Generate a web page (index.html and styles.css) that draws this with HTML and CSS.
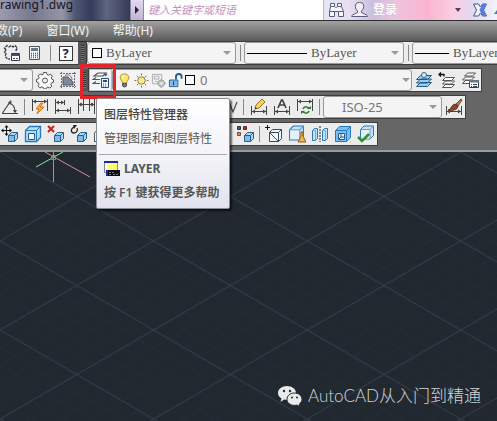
FILE: index.html
```html
<!DOCTYPE html>
<html lang="zh-CN">
<head>
<meta charset="utf-8">
<title>Drawing1.dwg</title>
<link rel="stylesheet" href="styles.css">
</head>
<body>
<svg class="defs" aria-hidden="true">
  <symbol id="cube" viewBox="0 0 10 10"><path d="M.5 3.5 3.5.5h6v6l-3 3h-6z" fill="#a9d4f5" stroke="#28608f"/><path d="M1 4h5v5H1z" fill="#7dbcec"/><path d="M.5 3.500h6v6M6.500 3.500l3-3" fill="none" stroke="#28608f"/></symbol>
  <symbol id="bigcube" viewBox="0 0 16 16"><path d="M1.500 4.500 5 1h9.500v9.500L11 14H1.500z" fill="#c4e3fa" stroke="#2778bd"/><path d="M2 5h9v8.500H2z" fill="#e4f2fc"/><path d="M1.500 4.500H11V14M11 4.500 14.500 1" fill="none" stroke="#5ba3dc"/></symbol>
  <symbol id="arrow" viewBox="0 0 8 4"><path d="M0 0h8L4 4z" fill="#999"/></symbol>
  <symbol id="dim" viewBox="0 0 18 18"><path d="M1.500 1v12M16.500 1v12M2 3.500h14" fill="none" stroke="#444"/><path d="m2 3.500 3-2v4zm14 0-3-2v4z" fill="#444"/></symbol>
  <symbol id="dimlow" viewBox="0 0 18 18"><path d="M1.500 8v9M16.500 8v9M2 13.500h14" fill="none" stroke="#444"/><path d="m2 13.500 3-2v4zm14 0-3-2v4z" fill="#444"/></symbol>
</svg>

<header class="titlebar">
  <div class="filename">rawing1.dwg</div>
  <button class="expand" aria-label="展开"><svg viewBox="0 0 4 8"><path d="M0 0v8l4-4z" fill="#223"/></svg></button>
  <input class="search" type="text" placeholder="键入关键字或短语" aria-label="键入关键字或短语">
  <div class="account">
    <button aria-label="搜索"><svg class="i18" viewBox="0 0 18 18"><path d="M3.500 5.500v-3h4v3l1 1h1l1-1v-3h4v3l2 5v5h-5v-5h-4v5h-5v-5z" fill="#f7f8fd" stroke="#56607c"/><path d="M2.500 10.500h5M11.500 10.500h5M3.500 5.500h4M10.500 5.500h4" stroke="#56607c"/></svg></button>
    <button class="login"><svg class="i18" viewBox="0 0 18 18"><path d="M6.500 10c-2-2-2.500-4-2-6C5 2 6.500 1.500 8.500 1.500S12 2 12.500 4c.5 2 0 4-2 6v1.500l5 2.500c1 .5 1 1.500 1 1.500H.5s0-1 1-1.500l5-2.500z" fill="#f4eef8" stroke="#56607c"/></svg><span>登录</span></button>
    <svg class="drop" viewBox="0 0 6 4"><path d="M0 0h6L3 4z" fill="#636"/></svg>
    <button aria-label="Exchange"><svg class="i18" viewBox="0 0 18 18"><path d="M2.500 3h5l2 3 2-3h4l-3 6 3 6h-4l-2-3-2 3h-5l3-6z" fill="#eef2ff" stroke="#3f5590"/><path d="M11.500 3h4l-3 6 3 6h-4l-3-6z" fill="#557ee0"/></svg></button>
    <svg class="tri" viewBox="0 0 8 10"><path d="m1 9 6-8v8z" fill="#5572b8"/></svg>
  </div>
</header>

<nav class="menu">
  <a href="#">数(P)</a><a href="#">窗口(W)</a><a href="#">帮助(H)</a>
</nav>

<main class="workspace">
  <div class="row props">
    <div class="bar edge">
      <button class="tool" aria-label="标记集"><svg viewBox="0 0 18 18"><path d="M3 6 1.500 4 4 1.500 6 3l2-1.500L10 3l2-1.500L14.500 4 13 6l1 1.500M3 6 1.500 8.500 3 10l-1 2 2.500 3H7" fill="none" stroke="#333" stroke-width="1.300" stroke-dasharray="3 1"/><path d="M8.500 9.500h8v7h-8z" fill="#fff" stroke="#335"/><path d="M8 10h9v2H8z" fill="#456"/><path d="M10 14.500h2m1 0h2" stroke="#456"/></svg></button>
      <button class="tool" aria-label="计算器"><svg viewBox="0 0 18 18"><path d="M3.500 2.500h10v13h-10z" fill="#f6f8fa" stroke="#456"/><path d="M5 4h7v3H5z" fill="#678"/><path d="M5 9.500h7M5 11.500h7M5 13.500h7" stroke="#567" stroke-dasharray="1 1" stroke-width="1.300"/></svg></button>
      <span class="sep"></span>
      <button class="tool help" aria-label="帮助"><b>?</b></button>
    </div>
    <span class="grip"></span>
    <div class="bar grow">
      <label class="combo color"><i class="swatch"></i><select aria-label="颜色"><option>ByLayer</option></select><svg class="caret"><use href="#arrow"/></svg></label>
      <span class="sep"></span>
      <label class="combo linetype"><i class="line"></i><select aria-label="线型"><option>ByLayer</option></select><svg class="caret"><use href="#arrow"/></svg></label>
      <span class="sep"></span>
      <label class="combo weight"><i class="line"></i><select aria-label="线宽"><option>ByLayer</option></select></label>
    </div>
  </div>

  <div class="row layers">
    <div class="bar edge">
      <label class="combo space"><select aria-label="工作空间"><option></option></select><svg class="caret"><use href="#arrow"/></svg></label>
      <button class="tool" aria-label="设置"><svg viewBox="0 0 18 18"><path d="M7.500 1.500h3l.5 2 1.500.7L14.400 3l1.900 2-1 1.900.5 1.300 1.700.6v2.400l-2 .6-.6 1.500 1 1.800-2 2-1.900-1-1.400.6-.6 1.300h-2l-.6-1.500-1.500-.6-1.900 1-2-2 1-1.800-.6-1.500-1.900-.6V8.400l2-.5.6-1.400-1-1.800 2-1.800 1.800 1 1.300-.6z" fill="#fafafa" stroke="#555"/><circle cx="9" cy="9.500" r="2.500" fill="#eee" stroke="#555"/></svg></button>
      <button class="tool" aria-label="我的工作空间"><svg viewBox="0 0 18 18"><path d="M2.500 1v16M15.500 1v16M1 2.500h16M1 15.500h16" stroke="#667" stroke-dasharray="2 1"/><path d="M4 14V6h5l5 5v3z" fill="#7d8996" stroke="#556"/><path d="M6 5c3-3 7 0 7 4" fill="none" stroke="#667"/></svg></button>
    </div>
    <span class="grip"></span>
    <div class="bar">
      <button class="tool active" aria-label="图层特性管理器"><svg viewBox="0 0 18 18"><path d="m2 5 4-3h8l-3 3zM8 8.500H1l3-2M8 12.500H1l3-2M13 5l2-2" fill="none" stroke="#555" stroke-width="1.200"/><path d="M9.500 7.500h7v9h-7z" fill="#eff6ff" stroke="#234f86"/><path d="M11 9h4v2h-4z" fill="#234f86"/><path d="M11 13h4m-4 2h4" stroke="#234f86" stroke-dasharray="1 1"/></svg></button>
      <div class="combo layer">
        <svg class="st" viewBox="0 0 14 18"><path d="M7 2C4 2 2 4 2.500 6.500c.3 2 2 3 2.500 5.500h4c.5-2.500 2.200-3.500 2.500-5.500C12 4 10 2 7 2z" fill="#ffe36b" stroke="#a88a34"/><path d="M5 12h4v3l-2 1-2-1z" fill="#778" stroke="#445"/><path d="M5 6c0-1 1-2 2-2" stroke="#fff" fill="none"/></svg>
        <svg class="st" viewBox="0 0 16 18"><circle cx="8" cy="9" r="4" fill="#ffe88a" stroke="#8d7436"/><path d="M8 1.500v2M8 14.500v2M.5 9h2M13.500 9h2M3 4l1.500 1.500M11.500 12.500 13 14M13 4l-1.500 1.500M4.500 12.500 3 14" stroke="#765"/></svg>
        <svg class="st" viewBox="0 0 16 18"><path d="M9 12.500H1.500v-10h10V8M3.500 4.500h5v3h-5zM4 10h3" fill="none" stroke="#aaa"/><circle cx="11" cy="12" r="3.500" fill="#ccc" stroke="#999"/><path d="M11 7v2m0 6v2m-5-5h2m6 0h2" stroke="#999"/><circle cx="11" cy="12" r="1" fill="#fff"/></svg>
        <svg class="st" viewBox="0 0 16 18"><path d="M8.500 8V5c0-4 6-4 6 0v2" fill="none" stroke="#245f94" stroke-width="2"/><path d="M1.500 8.500h9v7h-9z" fill="#7fbdf0" stroke="#245f94"/><path d="M6 10v4" stroke="#123"/></svg>
        <i class="swatch"></i>
        <select aria-label="图层"><option>0</option></select><svg class="caret"><use href="#arrow"/></svg>
      </div>
      <button class="tool" aria-label="置为当前"><svg viewBox="0 0 18 18"><path d="m1.500 15.500 4-4h11l-4 4zM1.500 12l4-4h11l-4 4zM1.500 8.500l4-4h11l-4 4z" fill="#9bcdf2" stroke="#235985"/><circle cx="9" cy="4" r="2.500" fill="#dcecf8" stroke="#36628a"/></svg></button>
      <button class="tool" aria-label="上一个图层"><svg viewBox="0 0 18 18"><path d="m4.500 16.500 3-3h9l-3 3zM4.500 13l3-3h9l-3 3zM4.500 9.500l3-3h9l-3 3z" fill="#fff" stroke="#555"/><path d="M1 3.500h5v2M3 1.500l-2 2 2 2" fill="none" stroke="#111" stroke-width="1.300"/></svg></button>
      <button class="tool" aria-label="图层状态管理器"><svg viewBox="0 0 18 18"><path d="m1.500 12.500 3-3h9l-3 3zM1.500 9l3-3h9l-3 3zM3.500 5l3-3h8l-3 3z" fill="#fff" stroke="#555"/><path d="M8.500 9.500h9v7h-9z" fill="#fff" stroke="#345"/><path d="M8 9h10v2.500H8z" fill="#678"/><path d="M10 13.500h1m1 0h4m-6 2h1m1 0h4" stroke="#345"/></svg></button>
    </div>
  </div>

  <div class="row dims">
    <div class="bar shift">
      <button class="tool" aria-label="角度"><svg viewBox="0 0 18 18"><path d="M1 15.500h16M1.500 15 10 2.500M8 5c4 1 6 4 6 9" fill="none" stroke="#444" stroke-width="1.200"/><path d="m7 4 4-.5L9 7zm5 8h4l-2 3.500z" fill="#444"/></svg></button>
      <span class="sep"></span>
      <button class="tool" aria-label="快速标注"><svg viewBox="0 0 18 18"><use href="#dim"/><path d="m10 5-5 6h3l-2 5 7-7H9l3-4z" fill="#f9b233" stroke="#d9731a"/></svg></button>
      <button class="tool" aria-label="基线"><svg viewBox="0 0 18 18"><path d="M1.500 1v15M10.500 2v5M16.500 9v7M2 4.500h8M2 12.500h14" fill="none" stroke="#444"/><path d="m2 4.500 3-2v4zm8 0-3-2v4zm-8 8 3-2v4zm14 0-3-2v4z" fill="#444"/></svg></button>
      <button class="tool" aria-label="连续"><svg viewBox="0 0 18 18"><path d="M1.500 1v15M6.500 1v12M12.500 1v12M17.500 1v15M2 6.500h15" fill="none" stroke="#444"/><path d="m2 6.500 2-2v4zm4 0-2-2v4zm7 0 2-2v4zm4 0-2-2v4z" fill="#444"/></svg></button>
      <span class="covered"></span>
      <button class="tool" aria-label="折弯线性"><svg viewBox="0 0 18 18"><path d="M1 9h6l2-5 4 10 4-10" fill="none" stroke="#444" stroke-width="1.200"/></svg></button>
      <span class="sep"></span>
      <button class="tool" aria-label="编辑标注"><svg viewBox="0 0 18 18"><use href="#dimlow"/><path d="m5 11 1-4 6-6 3 3-6 6z" fill="#ffd34f" stroke="#94702a"/><path d="m5 11 .5-2 1.500 1.500z" fill="#222"/></svg></button>
      <button class="tool" aria-label="编辑标注文字"><svg viewBox="0 0 18 18"><use href="#dimlow"/><path d="m5 10 3.500-8h1L13 10M6.500 7h5" fill="none" stroke="#444" stroke-width="1.700"/></svg></button>
      <button class="tool" aria-label="标注更新"><svg viewBox="0 0 18 18"><use href="#dim"/><path d="M7 11c1-3 5-3 6 0m0 2c-1 3-5 3-6 0" fill="none" stroke="#287b2c" stroke-width="1.500"/><path d="M11 11h4V8zM9 13H5v3z" fill="#287b2c"/></svg></button>
      <span class="sep"></span>
      <label class="combo style"><select aria-label="标注样式"><option>ISO-25</option></select><svg class="caret"><use href="#arrow"/></svg></label>
      <button class="tool" aria-label="标注样式管理"><svg viewBox="0 0 18 18"><use href="#dimlow"/><path d="m11 6 5-5 1 1-4 6z" fill="#b98a5b" stroke="#66452c"/><path d="M3 12c3 0 3-5 7-6l3 2c0 4-6 5-10 4z" fill="#8b4526" stroke="#5f2d18"/></svg></button>
    </div>
  </div>

  <div class="row">
    <div class="bar shift">
      <button class="tool" aria-label="移动面"><svg viewBox="0 0 18 18"><use href="#cube" x="7" y="7" width="10" height="10"/><path d="M5.500 1v9M1 5.500h9" stroke="#111"/><path d="m5.500 0 2 2.500h-4zm0 11-2-2.500h4zM0 5.500l2.500-2v4zm11 0-2.500 2v-4z" fill="#111"/></svg></button>
      <button class="tool" aria-label="偏移面"><svg viewBox="0 0 18 18"><path d="m1.500 5.500 4-4h11v11l-4 4h-11z" fill="#b9dcf6" stroke="#2579c1" stroke-width="1.300"/><path d="M1.500 5.500h11v11M12.500 5.500l4-4" fill="none" stroke="#2579c1"/><path d="M4.500 8.500h6v6h-6z" fill="#f4faff" stroke="#225c91"/></svg></button>
      <button class="tool" aria-label="删除面"><svg viewBox="0 0 18 18"><use href="#cube" x="7" y="7" width="10" height="10"/><path d="m1 1 6 6m0-6L1 7" stroke="#d0201b" stroke-width="2"/></svg></button>
      <button class="tool" aria-label="旋转面"><svg viewBox="0 0 18 18"><use href="#cube" x="7" y="7" width="10" height="10"/><path d="M4 2C0 4 1 8 4 8s4-3 3-5" fill="none" stroke="#222" stroke-width="1.300"/><path d="M3 0h4L4 4z" fill="#222"/></svg></button>
      <button class="tool" aria-label="倾斜面"><svg viewBox="0 0 18 18"><path d="m1.500 16.500V8l4-5h10v9l-4 4.500z" fill="#f8f8f8" stroke="#555"/></svg></button>
      <span class="covered"></span>
      <button class="tool" aria-label="着色边"><svg viewBox="0 0 18 18"><use href="#cube" x="8" y="7" width="10" height="10"/><path d="M1.500 1.500h3v3h-3z" fill="#35629b" stroke="#234"/><path d="M7.500 1.500h3v3h-3z" fill="#b23a2a" stroke="#622"/><path d="M1.500 7.500h3v3h-3z" fill="#e88b2f" stroke="#843"/></svg></button>
      <span class="sep"></span>
      <button class="tool" aria-label="压印"><svg viewBox="0 0 18 18"><path d="m4.500 7.500 3-3h9v9l-3 3h-9z" fill="#f4faff" stroke="#334b63"/><path d="M4.500 7.500h9v9M13.500 7.500l3-3M5 8l8 8" fill="none" stroke="#334b63"/><path d="M2.500 0v5M0 2.500h5" stroke="#111"/></svg></button>
      <button class="tool" aria-label="清除"><svg viewBox="0 0 18 18"><use href="#bigcube" width="17" height="17"/><path d="M13 7h2v4l3 6h-8l3-6z" fill="#f0b63f" stroke="#8d5e1b"/></svg></button>
      <button class="tool" aria-label="分割"><svg viewBox="0 0 18 18"><path d="m1.500 5.500 2-2h3v10l-2 2h-3zM11.500 5.500l2-2h3v10l-2 2h-3z" fill="#c5e3fb" stroke="#2778bd"/><path d="M4.500 15V5.500h-3M14.500 15V5.500h-3" fill="none" stroke="#68aee3"/><path d="M9 1v16" stroke="#222" stroke-dasharray="2 1"/></svg></button>
      <button class="tool" aria-label="抽壳"><svg viewBox="0 0 18 18"><path d="m1.500 5.500 4-4h11v11l-4 4h-11z" fill="#7ebdf0" stroke="#2579c1"/><path d="M1.500 5.500h11v11M12.500 5.500l4-4" fill="none" stroke="#2579c1"/><path d="M4.500 8.500h6v6h-6zM7 9v3l-2 2m2-2h3" fill="#e5f3ff" stroke="#225c91"/></svg></button>
      <button class="tool" aria-label="检查"><svg viewBox="0 0 18 18"><use href="#bigcube" x="2" width="16" height="16"/><path d="m1 12 4 4 7-7" fill="none" stroke="#35922b" stroke-width="2.500"/></svg></button>
    </div>
  </div>

  <div class="marker"></div>
  <aside class="tooltip" role="tooltip">
    <h1>图层特性管理器</h1>
    <p>管理图层和图层特性</p>
    <hr>
    <div class="command"><svg viewBox="0 0 16 16"><path d="M.5.5h13v11H.5z" fill="#ffff72" stroke="#889"/><path d="M0 0h14v2H0z" fill="#1a2a9b"/><path d="M1 2h2v8H1z" fill="#fff"/><path d="M3 9h13v6H3z" fill="#080b20"/><path d="M2 9h2v6H2z" fill="#1a2a9b"/><path d="M5 11.500h5M5 13.500h2m2 0h5" stroke="#777" stroke-dasharray="2 1"/></svg><b>LAYER</b></div>
    <p class="hint">按 F1 键获得更多帮助</p>
  </aside>
</main>

<section class="canvas">
  <svg class="grid" width="100%" height="100%">
    <defs>
      <pattern id="minor" width="30.720" height="17.800" patternUnits="userSpaceOnUse"><path d="M0 0l30.720 17.800M0 17.800 30.720 0" stroke="#242c35" stroke-width=".8"/></pattern>
      <pattern id="major" width="153.600" height="89" patternUnits="userSpaceOnUse"><path d="M0 0l153.600 89M0 89 153.600 0" stroke="#333d48"/></pattern>
    </defs>
    <rect width="100%" height="100%" fill="url(#minor)"/>
    <rect width="100%" height="100%" fill="url(#major)"/>
    <path d="m45 0 45 25" stroke="#d88c90"/><path d="M63 0 36 15" stroke="#8fe29d"/><path d="M53.500 0v30" stroke="#8d8df0"/><path d="M51.500 3.500h4v4h-4z" fill="none" stroke="#889"/>
  </svg>
  <div class="credit">
    <svg viewBox="0 0 24 21"><path d="M9 0c5 0 9 3 9 7s-4 7-9 7l-3-.5L2.500 16l1-3.500C1 11 0 9 0 7c0-4 4-7 9-7z" fill="#e8eaec"/><path d="M16.500 7c4 0 7.500 2.800 7.500 6.200 0 2-1 3.600-2.700 4.800l.7 2.700-3-1.600-2.500.3C12 19.400 9 16.600 9 13.200S12 7 16.500 7z" fill="#e8eaec" stroke="#222831"/><g fill="#222831"><circle cx="6" cy="5" r="1.200"/><circle cx="12" cy="5" r="1.200"/><circle cx="14" cy="11.500" r="1"/><circle cx="19" cy="11.500" r="1"/></g></svg>
    <span>AutoCAD从入门到精通</span>
  </div>
</section>
</body>
</html>
```
FILE: styles.css
```css
* { box-sizing: border-box; }
body {
  margin: 0;
  min-height: 100vh;
  display: flex;
  flex-direction: column;
  overflow: hidden;
  background: #212830;
  font: 12px/18px "Noto Sans", "Noto Sans CJK SC", sans-serif;
}
button, select, input { font: inherit; color: inherit; margin: 0; padding: 0; border: 0; background: none; }
select { appearance: none; outline: 0; opacity: 1; }
.defs { position: absolute; width: 0; height: 0; }

.titlebar { display: flex; height: 20px; background: #fff; overflow: hidden; }
.filename {
  width: 130px;
  color: #15151f;
  line-height: 10px;
  background: linear-gradient(90deg, #9d9aae, #77798f 25%, #9495a8 48%, #505672 58%, #343b5c 70%, #5f6480 82%, #343a58);
}
.expand { width: 14px; display: grid; place-items: center; background: linear-gradient(#e2daf0, #bfb4d6); border: solid #8d87a2; border-width: 0 1px; }
.expand svg { width: 4px; height: 8px; }
.search { width: 179px; padding-left: 4px; background: #fff; font-size: 11px; font-style: italic; }
.search::placeholder { color: #c48fc0; opacity: 1; }
.account {
  flex: 1;
  display: flex;
  align-items: center;
  gap: 4px;
  padding-left: 3px;
  border-left: 1px solid #b9b6cf;
  background: linear-gradient(90deg, #e4e6f6, #e9def0 15%, #c9bfdf 28%, #edc4dc 42%, #fbb4d2 60%, #f8cfe0 75%, #e3d8f0 85%, #f2f4fc);
}
.account button { display: flex; align-items: center; gap: 4px; height: 18px; color: #fff; }
.i18 { width: 18px; height: 18px; }
.login { margin-left: 2px; font-weight: 500; }
.drop { width: 6px; height: 4px; margin: 0 6px 0 auto; }
.tri { width: 8px; height: 10px; flex: none; margin-right: -4px; }

.menu {
  display: flex;
  gap: 24px;
  height: 22px;
  border: solid #2c2c2c;
  border-width: 1px 0;
  background: linear-gradient(#a2a2a2, #5a5a5a);
  line-height: 20px;
  overflow: hidden;
}
.menu a { color: #f4f4f4; text-decoration: none; }
.menu a:first-child { margin-left: -4px; }

.workspace {
  position: relative;
  display: flex;
  flex-direction: column;
  gap: 5px;
  padding-bottom: 5px;
  background: #666;
  border-bottom: 2px solid #989c9f;
}
.row { display: flex; height: 22px; }
.bar { display: flex; align-items: center; background: #ececec; box-shadow: 0 0 0 1px #3d3d3d; }
.grow { flex: 1; min-width: 0; }
.shift > :first-child { margin-left: -2px; }
.tool { width: 23px; height: 22px; flex: none; display: grid; place-items: center; }
.tool svg { width: 18px; height: 18px; }
.active { border: 1px solid #b5bccb; background: #f2f4f8; }
.help b { width: 14px; height: 15px; border: 1px solid #333; background: #fff; color: #223; font-size: 13px; line-height: 13px; }
.sep { width: 6px; height: 16px; flex: none; background: linear-gradient(#888, #888) center / 1px 100% no-repeat; }
.dims .sep { width: 7px; }
.props .sep { width: 8px; }
.props .edge { width: 78px; }
.layers .edge { width: 80px; }
.grip { width: 9px; flex: none; background: #555 repeating-linear-gradient(#333 0 1px, #777 1px 2px) center / 3px 16px no-repeat; }

.combo {
  display: flex;
  align-items: center;
  height: 22px;
  flex: none;
  gap: 4px;
  padding: 0 4px;
  border: 1px solid #999;
  border-radius: 3px;
  background: #f4f4f4;
  color: #555;
  font: 13px/18px "Liberation Serif", serif;
}
.combo select { flex: 1; min-width: 0; height: 18px; }
.caret { width: 8px; height: 4px; flex: none; }
.swatch { width: 10px; height: 10px; flex: none; border: 1px solid #000; background: #fff; }
.line { width: 60px; height: 1px; flex: none; background: #000; }
.color { width: 149px; }
.linetype { width: 160px; padding-left: 2px; }
.weight { flex: 1; padding-left: 2px; }
.weight .line { width: 34px; }
.space { width: 33px; border-left: 0; border-radius: 0 3px 3px 0; }
.layer { width: 300px; gap: 2px; padding-right: 1px; }
.layer, .style { color: #777; font: 13px/18px "Noto Sans", sans-serif; }
.layer select { margin-left: 3px; }
.st { width: 15px; height: 17px; flex: none; }
.style { width: 119px; padding-left: 18px; }
.covered { width: 120px; flex: none; }

.marker { position: absolute; left: 80px; top: 22px; width: 36px; height: 35px; border: 3px solid #e3242b; }
.tooltip {
  position: absolute;
  z-index: 1;
  left: 96px;
  top: 56px;
  width: 134px;
  padding: 7px 2px 6px;
  border: 1px solid #888a94;
  border-radius: 2px;
  background: linear-gradient(#fff, #f4f4f9 50%, #e2e2ee);
  box-shadow: 2px 2px 2px #0009;
  color: #555;
  white-space: nowrap;
}
.tooltip h1, .tooltip p { margin: 0 5px; font-size: 12px; line-height: 18px; }
.tooltip h1 { color: #444; font-weight: 500; }
.tooltip p { margin-top: 6px; }
.tooltip hr { height: 1px; margin: 6px 0 5px; border: 0; background: #aaa; }
.command { display: flex; align-items: center; gap: 4px; margin: 0 5px; }
.command svg { width: 16px; height: 16px; }
.tooltip .hint { font-weight: 600; }

.canvas { position: relative; flex: 1; display: flex; align-items: flex-end; justify-content: flex-end; padding: 0 16px 12px; }
.grid { position: absolute; inset: 0; }
.credit { position: relative; display: flex; align-items: center; gap: 6px; color: #d3d6d9; font: 300 17px/26px Lato, "Noto Sans CJK SC", sans-serif; }
.credit svg { width: 24px; height: 21px; }
```
